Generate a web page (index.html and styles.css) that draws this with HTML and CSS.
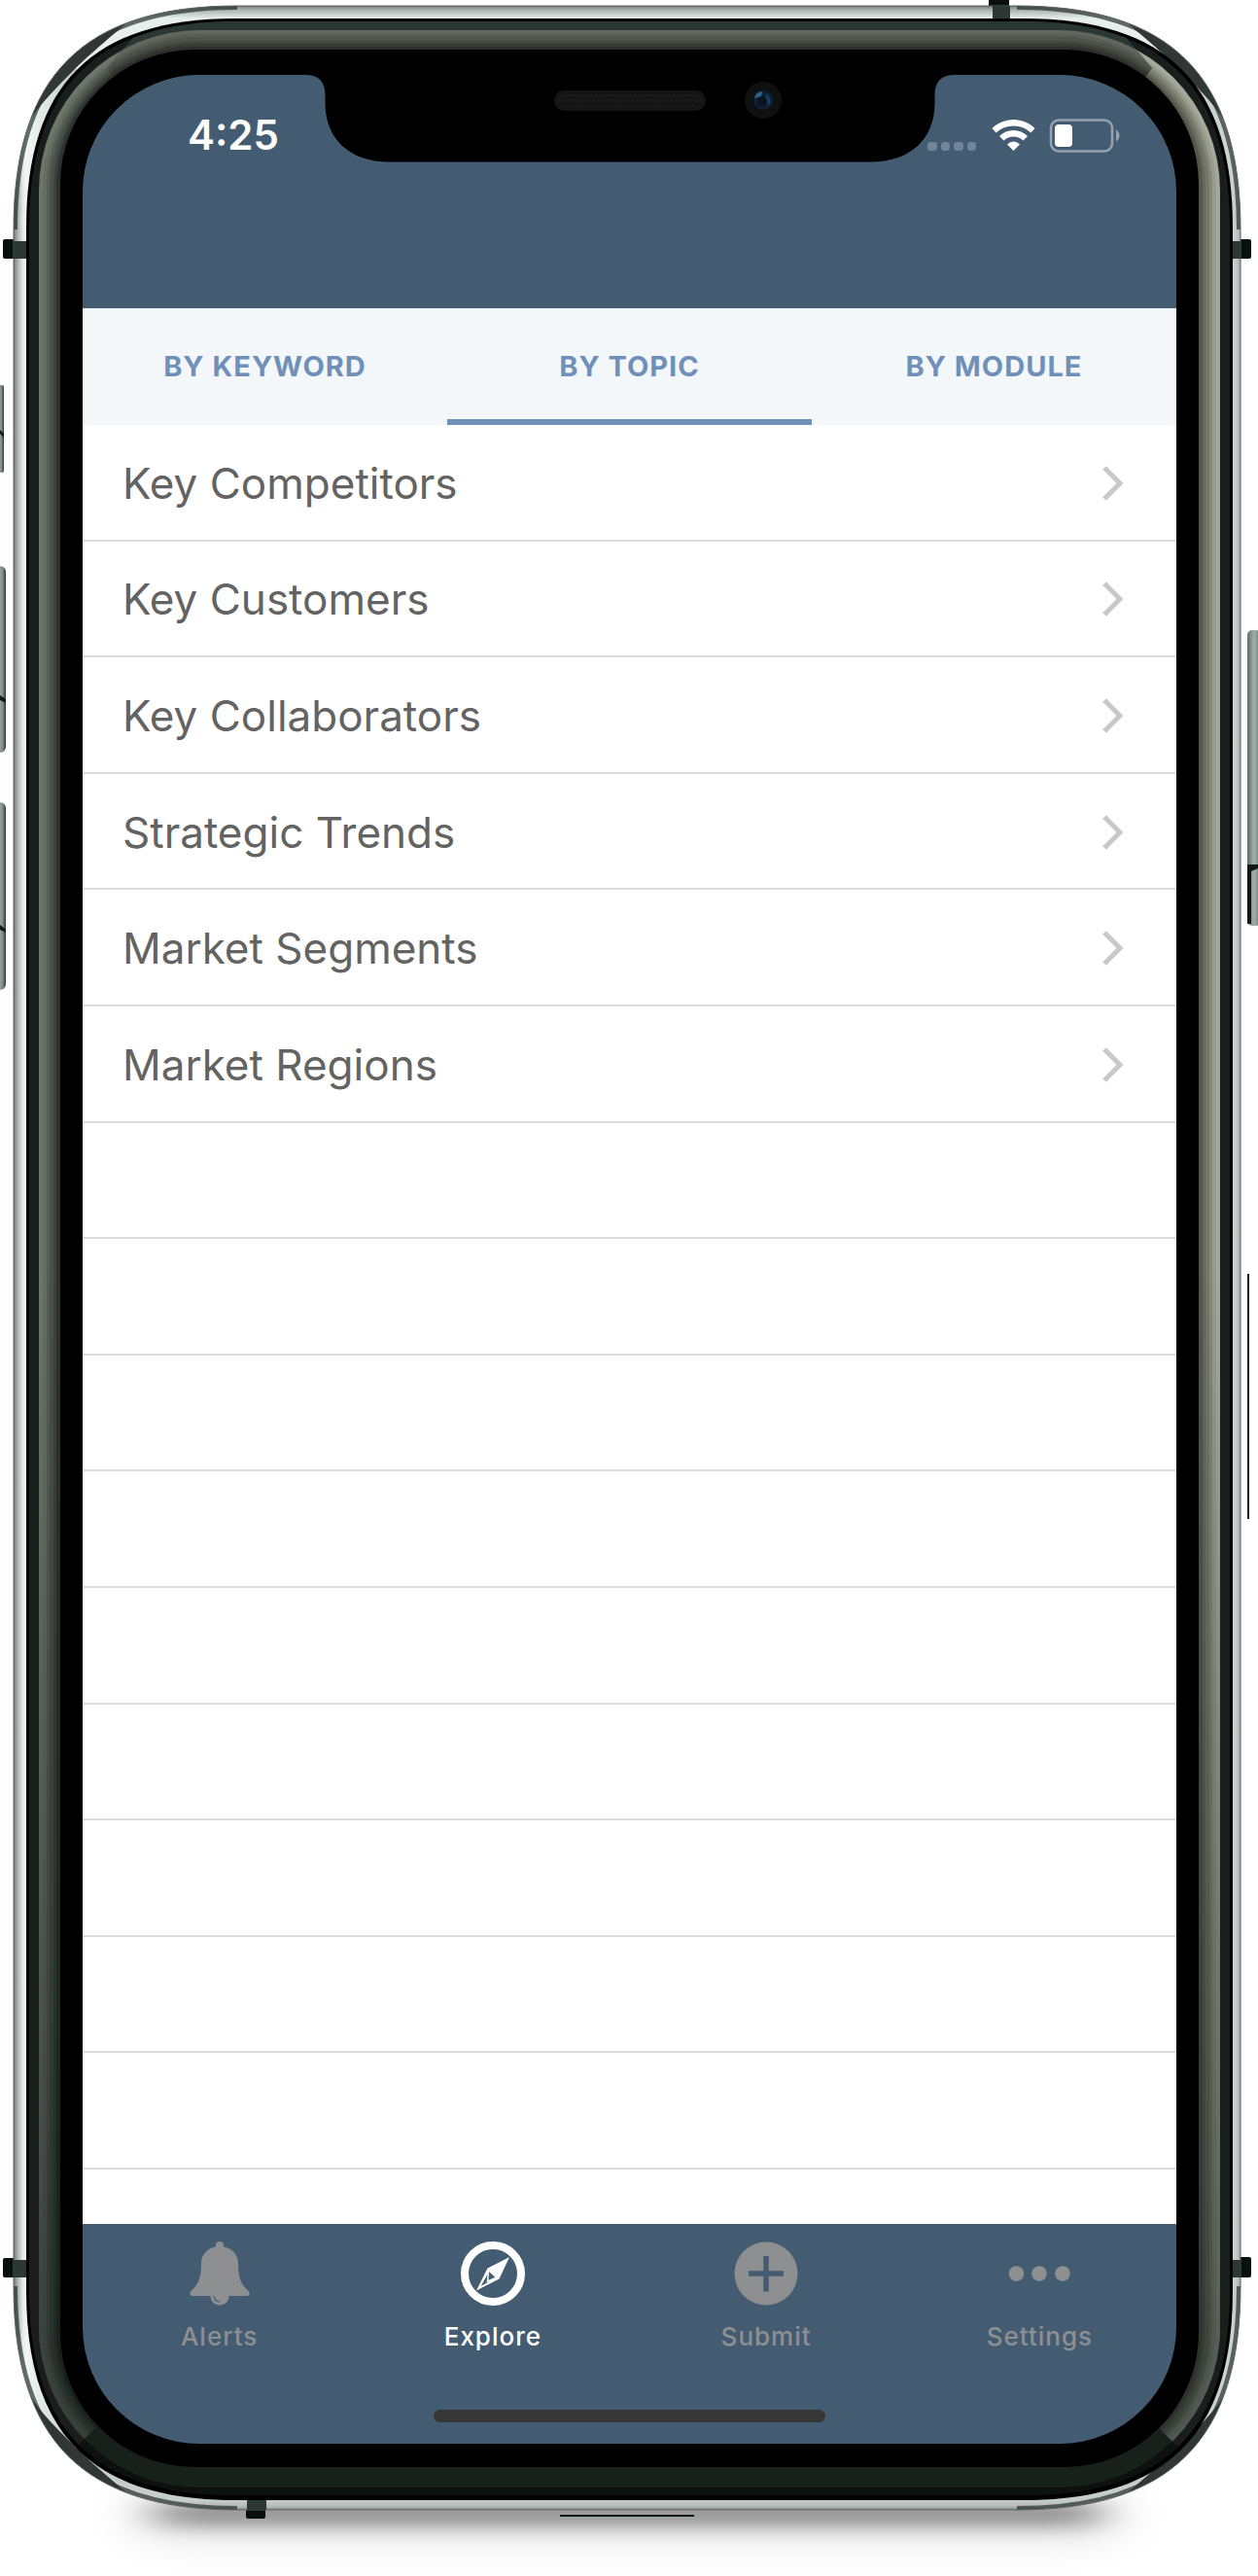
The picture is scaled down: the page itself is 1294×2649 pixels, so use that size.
FILE: index.html
```html
<!DOCTYPE html>
<html lang="en">
<head>
<meta charset="utf-8">
<meta name="viewport" content="width=device-width, initial-scale=1">
<title>Explore by topic</title>
<link rel="stylesheet" href="styles.css">
</head>
<body>
<div class="device">
  <svg class="device-frame" viewBox="0 0 1294 2649" preserveAspectRatio="none" aria-hidden="true">
    <defs>
      <filter id="soft" x="-20%" y="-200%" width="140%" height="500%"><feGaussianBlur stdDeviation="24 9"/></filter>
      <filter id="wide" x="-20%" y="-200%" width="140%" height="500%"><feGaussianBlur stdDeviation="30 20"/></filter>
      <linearGradient id="steelX" gradientUnits="userSpaceOnUse" x1="14" x2="1276" y1="0" y2="0">
        <stop offset="0" stop-color="#6d706f"/><stop offset=".003" stop-color="#a9acab"/><stop offset=".0075" stop-color="#e3eae7"/><stop offset=".0103" stop-color="#f0f7f5"/>
        <stop offset=".05" stop-color="#bfccc7"/><stop offset=".95" stop-color="#bfccc7"/>
        <stop offset=".993" stop-color="#ccd5d2"/><stop offset=".997" stop-color="#c4c6c8"/><stop offset="1" stop-color="#a5a3a6"/>
      </linearGradient>
      <linearGradient id="steelTop" gradientUnits="userSpaceOnUse" x1="0" x2="0" y1="6" y2="19">
        <stop offset="0" stop-color="#6f7472"/><stop offset=".3" stop-color="#a9b0ad"/><stop offset="1" stop-color="#e6efeb"/>
      </linearGradient>
      <linearGradient id="steelBottom" gradientUnits="userSpaceOnUse" x1="0" x2="0" y1="2571" y2="2581">
        <stop offset="0" stop-color="#c6cecb"/><stop offset=".7" stop-color="#b0b7b4"/><stop offset="1" stop-color="#7c807e"/>
      </linearGradient>
      <linearGradient id="button" x1="0" x2="1" y1="0" y2="0">
        <stop offset="0" stop-color="#5f6d68"/><stop offset=".5" stop-color="#a3b1ac"/><stop offset=".8" stop-color="#7d8c86"/><stop offset="1" stop-color="#2c3531"/>
      </linearGradient>
      <linearGradient id="fade" x1="0" x2="0" y1="0" y2="1">
        <stop offset=".5" stop-color="#050f0b" stop-opacity="0"/><stop offset="1" stop-color="#050f0b" stop-opacity=".55"/>
      </linearGradient>
      <clipPath id="sideTop"><path d="M14 6L180 172H1110L1276 6Z"/></clipPath>
      <clipPath id="sideBottom"><path d="M14 2581L180 2415H1110L1276 2581Z"/></clipPath>
      <clipPath id="bevelTop"><path d="M165 6L110 70L180 172H1110L1185 70L1130 6Z"/></clipPath>
      <clipPath id="bevelLeft"><path d="M14 6H165L110 70L180 172V2415L14 2581Z"/></clipPath>
      <clipPath id="bevelRight"><path d="M1276 6H1130L1185 70L1110 172V2415L1276 2581Z"/></clipPath>
      <path id="rim" d="M14 236C14 78 86 6 244 6H1046C1204 6 1276 78 1276 236V2351C1276 2509 1204 2581 1046 2581H244C86 2581 14 2509 14 2351Z"/>
      <clipPath id="rimClip"><use href="#rim"/></clipPath>
      <path id="bevel" d="M30 234C30 90 98 22 242 22H1053C1197 22 1265 90 1265 234V2356C1265 2500 1197 2566 1053 2566H242C98 2566 30 2500 30 2356Z"/>
      <path id="glint" d="M30 124C44 92 54 76 64 64S100 36 130 24C104 46 88 60 75 73C60 88 44 104 30 124Z"/>
      <rect id="r0" x="40" y="31" width="1215" height="2527" rx="165"/>
      <rect id="r1" x="44" y="35" width="1207" height="2519" rx="161"/>
      <rect id="r2" x="48" y="38" width="1199" height="2512" rx="156"/>
      <rect id="r3" x="51" y="42" width="1193" height="2505" rx="152"/>
      <rect id="r4" x="55" y="45" width="1185" height="2498" rx="147"/>
      <rect id="r5" x="58" y="48" width="1179" height="2492" rx="143"/>
    </defs>

    <!-- ground shadow -->
    <rect x="160" y="2572" width="970" height="26" rx="13" fill="#000" opacity=".36" filter="url(#soft)"/>
    <rect x="140" y="2560" width="1010" height="50" rx="25" fill="#000" opacity=".12" filter="url(#wide)"/>

    <!-- side keys -->
    <g fill="url(#button)">
      <rect x="-8" y="396" width="12" height="90" rx="2"/>
      <rect x="-10" y="582" width="16" height="192" rx="6"/>
      <rect x="-10" y="825" width="16" height="193" rx="6"/>
      <rect x="1283" y="648" width="14" height="304" rx="5"/>
    </g>
    <g fill="#111815">
      <path d="M0 442L4 446V450L0 446ZM0 715L6 719V723L0 720ZM0 951L6 956V959L0 956ZM1283 889H1294V893L1287 896V950H1283Z"/>
      <rect x="1283" y="1310" width="2" height="252"/>
      <rect x="576" y="2586" width="138" height="2"/>
    </g>

    <!-- antenna lines outside the rim -->
    <g fill="#07100d">
      <rect x="3" y="246" width="13" height="20" rx="2"/>
      <rect x="3" y="2322" width="13" height="20" rx="2"/>
      <rect x="1274" y="246" width="13" height="20" rx="2"/>
      <rect x="1274" y="2321" width="13" height="21" rx="2"/>
      <rect x="1017" y="-4" width="21" height="12"/>
      <rect x="253" y="2578" width="20" height="12" rx="2"/>
    </g>

    <!-- steel rim -->
    <use href="#rim" fill="url(#steelX)"/>
    <use href="#rim" fill="url(#steelTop)" clip-path="url(#sideTop)"/>
    <use href="#rim" fill="url(#steelBottom)" clip-path="url(#sideBottom)"/>
    <g clip-path="url(#rimClip)">
      <g fill="none" stroke="#26302c" stroke-width="8" opacity=".7">
        <path d="M14 236C14 78 86 6 244 6M1046 6C1204 6 1276 78 1276 236M1276 2351C1276 2509 1204 2581 1046 2581M244 2581C86 2581 14 2509 14 2351"/>
      </g>
      <g fill="#303735">
        <use href="#glint"/>
        <use href="#glint" transform="translate(1290 0) scale(-1 1)"/>
        <use href="#glint" transform="translate(0 2587) scale(1 -1)"/>
        <use href="#glint" transform="translate(1290 2587) scale(-1 -1)"/>
      </g>
    </g>
    <use href="#rim" fill="none" stroke="#5d6461" stroke-width="1"/>
    <g fill="#2d3835">
      <rect x="14" y="248" width="14" height="18"/><rect x="14" y="2324" width="14" height="18"/>
      <rect x="1267" y="248" width="9" height="18"/><rect x="1267" y="2324" width="9" height="18"/>
      <rect x="1021" y="6" width="18" height="14"/><rect x="254" y="2570" width="20" height="11"/>
    </g>

    <!-- black body and inner bevel -->
    <path d="M27 234C27 87 95 19 242 19H1053C1200 19 1268 87 1268 234V2356C1268 2503 1200 2571 1053 2571H242C95 2571 27 2503 27 2356Z" fill="#000"/>
    <use href="#bevel" fill="#191d1b"/>
    <use href="#bevel" fill="#2b3733" clip-path="url(#bevelTop)"/>
    <use href="#bevel" fill="#0c110f" clip-path="url(#sideBottom)"/>
    <g clip-path="url(#bevelLeft)">
      <use href="#r0" fill="#6f756b"/><use href="#r1" fill="#666d63"/><use href="#r2" fill="#575e55"/><use href="#r3" fill="#4a5149"/><use href="#r4" fill="#3c433c"/><use href="#r5" fill="#2c332e"/>
    </g>
    <g clip-path="url(#bevelRight)">
      <use href="#r0" fill="#a5a99b"/><use href="#r1" fill="#989c8e"/><use href="#r2" fill="#85887b"/><use href="#r3" fill="#75776b"/><use href="#r4" fill="#66685c"/><use href="#r5" fill="#55574c"/>
    </g>
    <use href="#r0" fill="url(#fade)"/>
    <g clip-path="url(#bevelTop)">
      <use href="#r0" fill="#63665d"/><use href="#r1" fill="#5a5d54"/><use href="#r2" fill="#4f5249"/><use href="#r3" fill="#44473f"/><use href="#r4" fill="#383b34"/><use href="#r5" fill="#2d302a"/>
    </g>
    <g clip-path="url(#sideBottom)"><use href="#r0" fill="#18201c"/></g>
    <rect x="62" y="51" width="1171" height="2486" rx="138" fill="#000"/>
  </svg>

  <main class="screen">
    <div class="notch" aria-hidden="true">
      <svg width="668" height="90" viewBox="314 77 668 90">
        <path fill="#000" d="M314 76V77C328 77 334.500 84 334.500 98V106C334.500 143 360 166.500 400 166.500H896C936 166.500 961.500 143 961.500 106V98C961.500 84 968 77 982 77V76Z"/>
        <rect x="570" y="93" width="156" height="21" rx="10.500" fill="#141414"/>
        <path d="M577 98H719M574 103.500H722M577 109H719" stroke="#1c1c1c" stroke-width="2" stroke-dasharray="3 2"/>
        <circle cx="785" cy="103" r="19" fill="#0f1110"/>
        <circle cx="785" cy="103" r="10" fill="#0d2036"/>
        <path d="M776 101A9 9 0 0 1 784 94L783 99Z" fill="#2f6390"/>
        <path d="M788 97Q795 101 791 108L786 104Z" fill="#143f6a"/>
        <circle cx="784" cy="104" r="5" fill="#091420"/>
      </svg>
    </div>

    <header class="app-header">
      <div class="status-bar">
        <time class="clock">4:25</time>
        <svg class="status-icons" width="198" height="36" viewBox="0 0 198 36" role="img" aria-label="No signal, Wi-Fi on, battery low">
          <g fill="#728499">
            <rect y="25" width="10" height="9" rx="3.500"/><rect x="14" y="25" width="9" height="9" rx="3.500"/><rect x="27" y="25" width="10" height="9" rx="3.500"/><rect x="41" y="25" width="9" height="9" rx="3.500"/>
          </g>
          <g fill="#fff">
            <path d="M88.500 2C97 2 105 5.500 110.500 11L106.500 15.500Q99 8.500 88.500 8.500T70.500 15.500L66.500 11C72 5.500 80 2 88.500 2Z"/>
            <path d="M88.500 13Q97 13 103 19L98.500 23.500Q94 19.500 88.500 19.500T78.500 23.500L74 19Q80 13 88.500 13Z"/>
            <path d="M88.500 24.500Q92 24.500 95 27.500L88.500 34L82 27.500Q85 24.500 88.500 24.500Z"/>
            <rect x="131" y="7" width="18" height="23" rx="4"/>
          </g>
          <rect x="127" y="2.500" width="63" height="32" rx="8" fill="none" stroke="#94a2b2" stroke-width="2.500"/>
          <path d="M194 12.500Q197.500 15 197.500 18.500T194 24.500Z" fill="#94a2b2"/>
        </svg>
      </div>
    </header>

    <div class="tabs" role="tablist">
      <button class="tab" type="button" role="tab" aria-selected="false">BY KEYWORD</button>
      <button class="tab tab-active" type="button" role="tab" aria-selected="true">BY TOPIC</button>
      <button class="tab" type="button" role="tab" aria-selected="false">BY MODULE</button>
    </div>

    <ul class="topics">
      <li><a class="topic" href="#competitors">Key Competitors<svg class="chevron" viewBox="0 0 22 36"><path d="M2 2L18 18L2 34"/></svg></a></li>
      <li><a class="topic" href="#customers">Key Customers<svg class="chevron" viewBox="0 0 22 36"><path d="M2 2L18 18L2 34"/></svg></a></li>
      <li><a class="topic" href="#collaborators">Key Collaborators<svg class="chevron" viewBox="0 0 22 36"><path d="M2 2L18 18L2 34"/></svg></a></li>
      <li><a class="topic" href="#trends">Strategic Trends<svg class="chevron" viewBox="0 0 22 36"><path d="M2 2L18 18L2 34"/></svg></a></li>
      <li><a class="topic" href="#segments">Market Segments<svg class="chevron" viewBox="0 0 22 36"><path d="M2 2L18 18L2 34"/></svg></a></li>
      <li><a class="topic" href="#regions">Market Regions<svg class="chevron" viewBox="0 0 22 36"><path d="M2 2L18 18L2 34"/></svg></a></li>
      <li></li><li></li><li></li><li></li><li></li><li></li><li></li><li></li><li></li>
    </ul>

    <footer class="bottom-bar">
      <nav class="nav">
        <a class="nav-item" href="#alerts">
          <svg class="nav-icon" viewBox="0 0 66 66"><path fill="currentColor" d="M33 0a4 4 0 0 1 4 4v1.500C46 7 52 14 52 22C52 38 55 44 62 50.500C65 53 63.500 56 61 56H42.500C42.500 62 38 65.500 33 65.500S23.500 62 23.500 56H5C2.500 56 1 53 4 50.500C11 44 14 38 14 22C14 14 20 7 29 5.500V4a4 4 0 0 1 4-4Z"/><path d="M27 56Q27.500 62 33.500 62" fill="none" stroke="#445c72" stroke-width="1.200"/></svg>
          Alerts
        </a>
        <a class="nav-item nav-active" href="#explore" aria-current="page">
          <svg class="nav-icon" viewBox="0 0 66 66"><circle cx="33" cy="33" r="29" fill="none" stroke="currentColor" stroke-width="8"/><path fill="currentColor" fill-rule="evenodd" d="M50 16L39.500 38.500L16 50.500L27.500 27.500ZM27.500 34L20.500 46L34 38.500L35 36.500L29 31Z"/><path fill="none" stroke="currentColor" stroke-width="1.500" d="M28.500 30L27.500 41L36 37.500"/></svg>
          Explore
        </a>
        <a class="nav-item" href="#submit">
          <svg class="nav-icon" viewBox="0 0 66 66"><circle cx="33" cy="33" r="32.500" fill="currentColor"/><path d="M33 15V51.500M15 33H51" stroke="#445c72" stroke-width="5.500"/></svg>
          Submit
        </a>
        <a class="nav-item" href="#settings">
          <svg class="nav-icon" viewBox="0 0 66 66"><g fill="currentColor"><circle cx="9.500" cy="33" r="7.800"/><circle cx="33" cy="33" r="7.800"/><circle cx="57" cy="33" r="7.800"/></g></svg>
          Settings
        </a>
      </nav>
      <div class="home-indicator"></div>
    </footer>
  </main>
</div>
</body>
</html>
```
FILE: styles.css
```css
* { box-sizing: border-box; }

body {
  margin: 0;
  background: #fff;
  font-family: Inter, "Liberation Sans", sans-serif;
}

.device {
  position: relative;
  padding: 77px 84px 136px 85px;
  overflow: hidden;
}

/* The phone body is drawn behind the screen and stretches with it. */
.device-frame {
  position: absolute;
  inset: 0;
  width: 100%;
  height: 100%;
}

.screen {
  position: relative;
  display: flex;
  flex-direction: column;
  aspect-ratio: 1125 / 2436;
  border-radius: 120px;
  overflow: hidden;
}

/* The notch lies over the top of the header. */
.notch {
  position: absolute;
  top: 0;
  left: 0;
  right: 0;
  display: flex;
  justify-content: center;
}

.notch svg { display: block; }

.app-header {
  min-height: 240px;
  padding: 36px 58px 0 108px;
  background: #445c72;
}

.status-bar {
  display: flex;
  align-items: center;
  justify-content: space-between;
}

.clock {
  color: #fff;
  font-size: 42px;
  line-height: 52px;
  font-weight: 600;
}

.tabs {
  display: grid;
  grid-template-columns: repeat(3, 1fr);
  background: #f3f7fa;
}

.tab {
  min-height: 120px;
  padding: 6px 0 0;
  border: 0;
  border-bottom: 6px solid transparent;
  background: none;
  color: #6e90b9;
  font: inherit;
  font-size: 29px;
  line-height: 36px;
  font-weight: 650;
  letter-spacing: 1px;
}

.tab-active { border-bottom-color: #6e90b9; }

.topics {
  flex: 1;
  display: grid;
  grid-auto-rows: 1fr;
  margin: 0;
  padding: 0 0 56px;
  background: #fff;
  list-style: none;
}

.topics li {
  display: grid;
  border-bottom: 2px solid #dcdcde;
}

.topic {
  display: flex;
  align-items: center;
  justify-content: space-between;
  padding: 2px 54px 0 41px;
  color: #636363;
  font-size: 44px;
  line-height: 56px;
  text-decoration: none;
}

.chevron {
  width: 22px;
  height: 36px;
  fill: none;
  stroke: #c7c7cc;
  stroke-width: 5;
}

.bottom-bar {
  display: flex;
  flex-direction: column;
  align-items: center;
  gap: 58px;
  padding: 18px 0 22px;
  background: #445c72;
}

.nav {
  align-self: stretch;
  display: grid;
  grid-template-columns: repeat(4, 1fr);
}

.nav-item {
  display: flex;
  flex-direction: column;
  align-items: center;
  gap: 14px;
  color: #8d8f91;
  font-size: 26px;
  line-height: 35px;
  font-weight: 500;
  letter-spacing: 1px;
  text-decoration: none;
}

.nav-active { color: #fff; }

.nav-icon {
  width: 66px;
  height: 66px;
}

.home-indicator {
  width: 403px;
  max-width: 60%;
  height: 13px;
  border-radius: 7px;
  background: #363636;
}
```
